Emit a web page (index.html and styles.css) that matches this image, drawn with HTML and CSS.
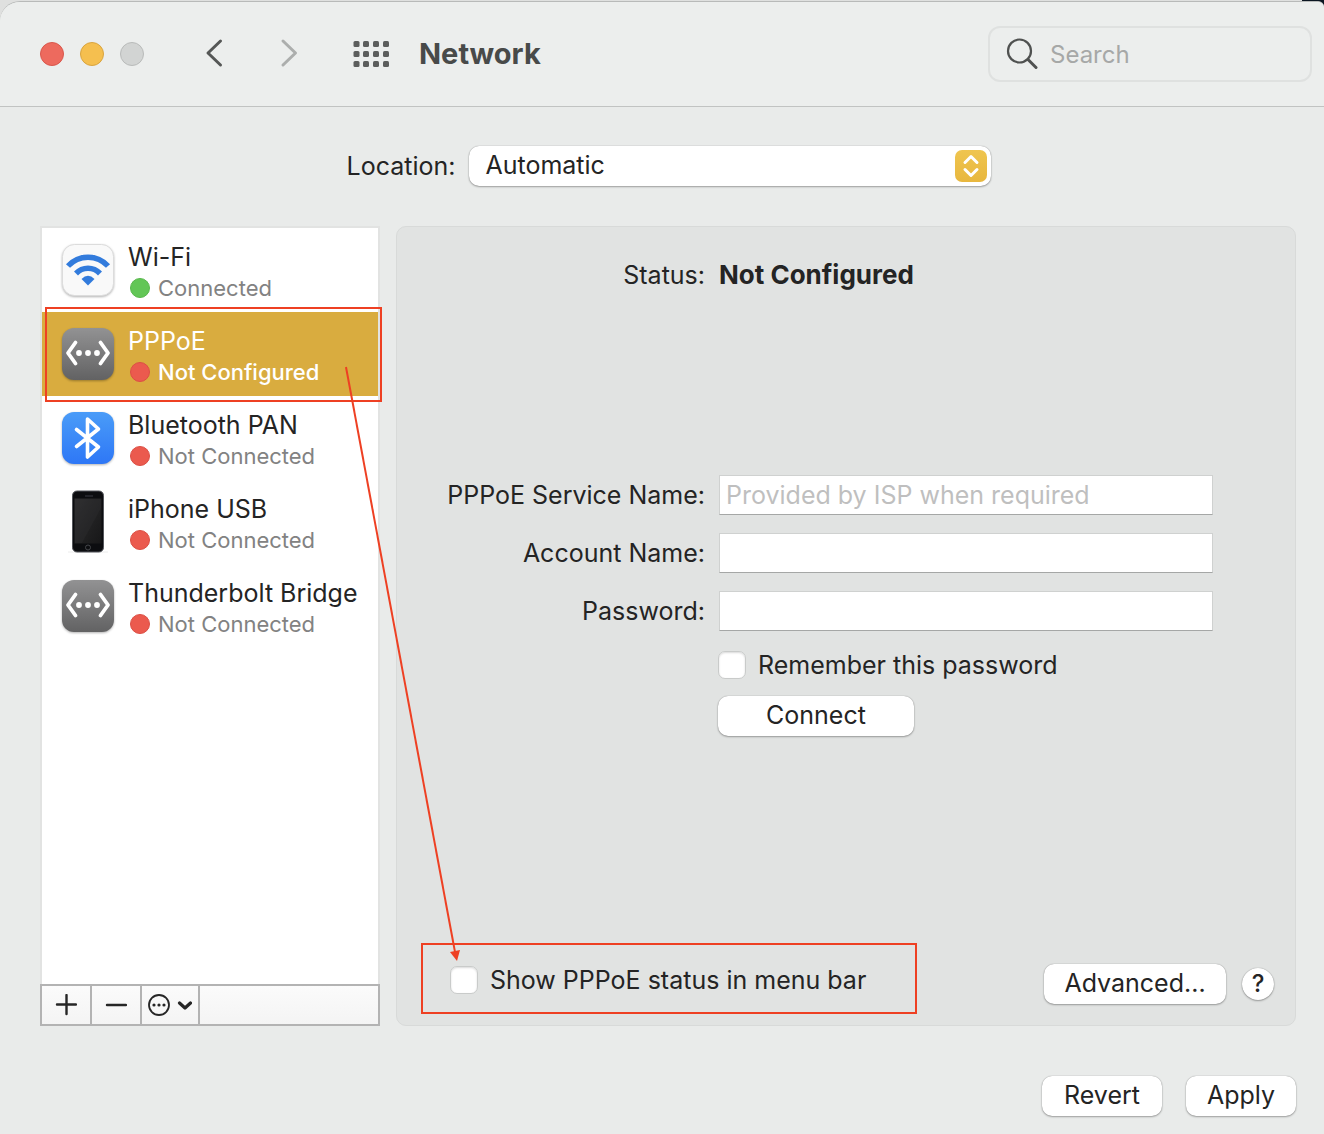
FILE: index.html
```
<!DOCTYPE html>
<html lang="en">
<head>
    <meta charset="UTF-8">
    <meta name="viewport" content="width=device-width, initial-scale=1.0">
    <title>Network</title>
    <link rel="stylesheet" href="styles.css">
</head>
<body>
    <div class="window">
        <header class="titlebar">
            <div class="lights">
                <button type="button" class="light close" aria-label="Close"></button>
                <button type="button" class="light minimize" aria-label="Minimize"></button>
                <button type="button" class="light zoom" aria-label="Zoom" disabled></button>
            </div>
            <nav class="nav">
                <button type="button" class="icon-button" aria-label="Back">
                    <svg width="20" height="32" viewBox="0 0 20 32"><path d="M16.5 3 L4 15 L16.5 27" fill="none" stroke="#555756" stroke-width="3" stroke-linecap="round" stroke-linejoin="round"/></svg>
                </button>
                <button type="button" class="icon-button" aria-label="Forward" disabled>
                    <svg width="20" height="32" viewBox="0 0 20 32"><path d="M3 3 L15.5 15 L3 27" fill="none" stroke="#acaead" stroke-width="3" stroke-linecap="round" stroke-linejoin="round"/></svg>
                </button>
            </nav>
            <button type="button" class="icon-button" aria-label="Show all">
                <svg width="36" height="26" viewBox="0 0 36 26" fill="#5c5e5d">
                    <rect x="0.5" y="0" width="6" height="6" rx="1.5"/><rect x="10" y="0" width="6" height="6" rx="1.5"/><rect x="20" y="0" width="6" height="6" rx="1.5"/><rect x="30" y="0" width="6" height="6" rx="1.5"/>
                    <rect x="0.5" y="10" width="6" height="6" rx="1.5"/><rect x="10" y="10" width="6" height="6" rx="1.5"/><rect x="20" y="10" width="6" height="6" rx="1.5"/><rect x="30" y="10" width="6" height="6" rx="1.5"/>
                    <rect x="0.5" y="20" width="6" height="6" rx="1.5"/><rect x="10" y="20" width="6" height="6" rx="1.5"/><rect x="20" y="20" width="6" height="6" rx="1.5"/><rect x="30" y="20" width="6" height="6" rx="1.5"/>
                </svg>
            </button>
            <h1>Network</h1>
            <label class="search">
                <svg width="32" height="32" viewBox="0 0 32 32" fill="none" stroke="#4f5150" stroke-linecap="round"><circle cx="13.5" cy="13" r="11.5" stroke-width="2.2"/><path d="M22 21.5 L30 29.5" stroke-width="3"/></svg>
                <input type="search" placeholder="Search" aria-label="Search">
            </label>
        </header>

        <div class="location">
            <label for="location">Location:</label>
            <div class="select">
                <select id="location">
                    <option>Automatic</option>
                </select>
                <svg class="stepper" width="32" height="32" viewBox="0 0 32 32">
                    <defs><linearGradient id="gold" x1="0" y1="0" x2="0" y2="1"><stop offset="0" stop-color="#efc54f"/><stop offset="1" stop-color="#e8b73e"/></linearGradient></defs>
                    <rect width="32" height="32" rx="7" fill="url(#gold)"/>
                    <path d="M10 12.5 L16 6.5 L22 12.5 M10 19.5 L16 25.5 L22 19.5" fill="none" stroke="#fff" stroke-width="3" stroke-linecap="round" stroke-linejoin="round"/>
                </svg>
            </div>
        </div>

        <main class="content">
            <section class="sidebar">
                <ul class="services">
                    <li class="service">
                        <svg class="service-icon" viewBox="0 0 52 52">
                            <rect x="0.5" y="0.5" width="51" height="51" rx="12" fill="#f9f9f9" stroke="#dcdcdc"/>
                            <g fill="none" stroke="#327bdc" stroke-width="5.5"><path d="M6 22 A27 27 0 0 1 46 22"/><path d="M14 29.5 A16.5 16.5 0 0 1 38 29.5"/></g>
                            <path d="M19.5 35 Q26 28.5 32.5 35 L26 41.5 Z" fill="#327bdc"/>
                        </svg>
                        <div>
                            <div class="name">Wi-Fi</div>
                            <div class="state"><span class="dot on"></span>Connected</div>
                        </div>
                    </li>
                    <li class="service selected">
                        <svg class="service-icon" viewBox="0 0 52 52">
                            <defs><linearGradient id="gray" x1="0" y1="0" x2="0" y2="1"><stop offset="0" stop-color="#929293"/><stop offset="1" stop-color="#626263"/></linearGradient></defs>
                            <rect width="52" height="52" rx="12" fill="url(#gray)"/>
                            <path d="M13.5 14.5 L6 25 L13.5 35.5 M38.5 14.5 L46 25 L38.5 35.5" fill="none" stroke="#fff" stroke-width="3.8" stroke-linecap="round" stroke-linejoin="round"/>
                            <g fill="#fff"><circle cx="17" cy="25" r="2.9"/><circle cx="26" cy="25" r="2.9"/><circle cx="35" cy="25" r="2.9"/></g>
                        </svg>
                        <div>
                            <div class="name">PPPoE</div>
                            <div class="state"><span class="dot"></span>Not Configured</div>
                        </div>
                    </li>
                    <li class="service">
                        <svg class="service-icon" viewBox="0 0 52 52">
                            <defs><linearGradient id="blue" x1="0" y1="0" x2="0" y2="1"><stop offset="0" stop-color="#4a9cf8"/><stop offset="1" stop-color="#2e77f6"/></linearGradient></defs>
                            <rect width="52" height="52" rx="12" fill="url(#blue)"/>
                            <path d="M14.5 17.5 L36.5 35 L25.5 45 V7 L36.500 17 L14.5 34.5" fill="none" stroke="#fff" stroke-width="3.6" stroke-linecap="round" stroke-linejoin="round"/>
                        </svg>
                        <div>
                            <div class="name">Bluetooth PAN</div>
                            <div class="state"><span class="dot"></span>Not Connected</div>
                        </div>
                    </li>
                    <li class="service">
                        <svg class="service-icon phone" viewBox="0 0 52 64">
                            <defs><linearGradient id="glass" x1="0" y1="0" x2="1" y2="1"><stop offset="0" stop-color="#2f2f30"/><stop offset="1" stop-color="#171718"/></linearGradient></defs>
                            <path d="M6 62 H46" stroke="#ececec"/>
                            <rect x="10.5" y="1" width="31" height="61" rx="4.5" fill="#0c0d10" stroke="#55575c"/>
                            <rect x="12.5" y="8.5" width="27" height="45" fill="url(#glass)"/>
                            <path d="M39 9 V18 L20 53 H13 V9 Z" fill="#333334" opacity="0.3"/>
                            <path d="M23 6 H31" stroke="#3b3d44"/>
                            <circle cx="26" cy="57.5" r="2.5" fill="none" stroke="#44464a"/>
                        </svg>
                        <div>
                            <div class="name">iPhone USB</div>
                            <div class="state"><span class="dot"></span>Not Connected</div>
                        </div>
                    </li>
                    <li class="service">
                        <svg class="service-icon" viewBox="0 0 52 52">
                            <rect width="52" height="52" rx="12" fill="url(#gray)"/>
                            <path d="M13.5 14.5 L6 25 L13.5 35.5 M38.5 14.5 L46 25 L38.5 35.5" fill="none" stroke="#fff" stroke-width="3.8" stroke-linecap="round" stroke-linejoin="round"/>
                            <g fill="#fff"><circle cx="17" cy="25" r="2.9"/><circle cx="26" cy="25" r="2.9"/><circle cx="35" cy="25" r="2.9"/></g>
                        </svg>
                        <div>
                            <div class="name">Thunderbolt Bridge</div>
                            <div class="state"><span class="dot"></span>Not Connected</div>
                        </div>
                    </li>
                </ul>
                <div class="toolbar">
                    <button type="button" aria-label="Add service">
                        <svg width="22" height="22" viewBox="0 0 22 22"><path d="M11.5 1 V20 M2 10.5 H21" stroke="#262626" stroke-width="2.4" stroke-linecap="round"/></svg>
                    </button>
                    <button type="button" aria-label="Remove service">
                        <svg width="22" height="22" viewBox="0 0 22 22"><path d="M2 11 H21" stroke="#262626" stroke-width="2.4" stroke-linecap="round"/></svg>
                    </button>
                    <button type="button" class="more" aria-label="More actions">
                        <svg width="44" height="22" viewBox="0 0 44 22">
                            <circle cx="11" cy="11" r="10" fill="none" stroke="#262626" stroke-width="1.8"/>
                            <g fill="#262626"><circle cx="6" cy="11" r="1.6"/><circle cx="11" cy="11" r="1.6"/><circle cx="16" cy="11" r="1.6"/></g>
                            <path d="M31.5 9 L37 14 L42.500 9" fill="none" stroke="#262626" stroke-width="3.2" stroke-linecap="round" stroke-linejoin="round"/>
                        </svg>
                    </button>
                </div>
            </section>

            <form class="panel">
                <div class="status">
                    <span class="field-label">Status:</span>
                    <strong>Not Configured</strong>
                </div>
                <div class="fields">
                    <label for="service">PPPoE Service Name:</label>
                    <input type="text" id="service" placeholder="Provided by ISP when required">
                    <label for="account">Account Name:</label>
                    <input type="text" id="account">
                    <label for="password">Password:</label>
                    <input type="password" id="password">
                </div>
                <div class="actions">
                    <label class="check"><input type="checkbox">Remember this password</label>
                    <button type="button" class="button connect">Connect</button>
                </div>
                <div class="panel-footer">
                    <label class="check highlight"><input type="checkbox">Show PPPoE status in menu bar</label>
                    <div class="buttons">
                        <button type="button" class="button advanced">Advanced...</button>
                        <button type="button" class="help" aria-label="Help">?</button>
                    </div>
                </div>
            </form>

            <!-- arrow from the PPPoE service to the menu bar option -->
            <svg class="arrow" width="120" height="600" viewBox="0 0 120 600">
                <path d="M2 1 L111 586" stroke="#ee4023" stroke-width="2"/>
                <path d="M113 595 L106 586 L116 584 Z" fill="#ee4023"/>
            </svg>
        </main>

        <footer class="footer">
            <button type="button" class="button revert">Revert</button>
            <button type="button" class="button apply">Apply</button>
        </footer>
    </div>
</body>
</html>
```
FILE: styles.css
```
* {
    box-sizing: border-box;
}
body {
    margin: 0;
    padding-top: 1px;
    background: linear-gradient(to left, #0b1622 22px, #dfe0df 22px);
    color: #242424;
    font-family: Inter, "Liberation Sans", sans-serif;
    font-size: 25px;
    line-height: 32px;
}
button, input, select {
    font: inherit;
    color: inherit;
}
button {
    padding: 0;
    border: none;
    background: none;
}
svg {
    display: block;
}
.window {
    display: flex;
    flex-direction: column;
    min-height: calc(100vh - 1px);
    border-top: 1px solid #b8bab9;
    border-radius: 20px 6px 0 0;
    background: #e9ebea;
}

/* Title bar */
.titlebar {
    display: flex;
    align-items: center;
    height: 105px;
    padding: 0 12px 0 40px;
    border-bottom: 1px solid #c1c3c2;
    border-radius: 20px 6px 0 0;
    background: #eceeed;
}
.lights {
    display: flex;
    gap: 16px;
}
.light {
    width: 24px;
    height: 24px;
    border: 1px solid #b9bbba;
    border-radius: 50%;
    background: #d2d4d3;
}
.light.close {
    border-color: #d9574c;
    background: #ed6a5e;
}
.light.minimize {
    border-color: #d9a43f;
    background: #f5bf4f;
}
.nav {
    display: flex;
    gap: 56px;
    margin: 0 53px 0 60px;
}
h1 {
    margin: 0 auto 0 30px;
    color: #484a49;
    font-size: 29px;
    font-weight: 700;
}
.search {
    display: flex;
    align-items: center;
    gap: 12px;
    width: 324px;
    height: 56px;
    padding: 0 16px;
    border: 2px solid #dfe1e0;
    border-radius: 12px;
}
.search input {
    flex: 1;
    min-width: 0;
    padding: 2px 0 0;
    border: none;
    outline: none;
    background: none;
    font-size: 24px;
}
.search input::placeholder {
    color: #a6a8a7;
}

/* Location */
.location {
    display: flex;
    align-items: center;
    justify-content: center;
    gap: 14px;
    padding: 39px 0 40px 14px;
}
.select {
    position: relative;
    width: 522px;
}
.select select {
    display: block;
    width: 100%;
    height: 40px;
    padding: 0 16px 2px;
    border: none;
    border-radius: 10px;
    appearance: none;
    background: #fff;
    box-shadow: 0 0 1px rgba(0,0,0,0.4), 0 1px 2px rgba(0,0,0,0.3);
}
.stepper {
    position: absolute;
    top: 4px;
    right: 4px;
    pointer-events: none;
}

/* Main area */
.content {
    position: relative;
    display: flex;
    flex: 1;
    gap: 16px;
    padding: 0 28px 0 40px;
}
.sidebar {
    display: flex;
    flex-direction: column;
    width: 340px;
}
.services {
    flex: 1;
    margin: 0;
    padding: 0;
    border: 2px solid #e2e3e2;
    border-bottom: none;
    background: #fff;
    list-style: none;
}
.service {
    position: relative;
    display: flex;
    gap: 14px;
    height: 84px;
    padding: 13px 0 0 20px;
}
.service-icon {
    width: 52px;
    height: 52px;
    margin-top: 3px;
    filter: drop-shadow(0 1px 1px rgba(0,0,0,0.3));
}
.service-icon.phone {
    height: 64px;
    margin-top: -3px;
    filter: none;
}
.state {
    display: flex;
    align-items: center;
    gap: 8px;
    height: 30px;
    padding-left: 2px;
    color: #828282;
    font-size: 22px;
}
.dot {
    width: 20px;
    height: 20px;
    border: 1px solid #dc4f44;
    border-radius: 50%;
    background: #eb5a4e;
}
.dot.on {
    border-color: #58b84c;
    background: #62c656;
}
.selected {
    background: #d9ac3f;
    color: #fff;
}
.selected .state {
    color: #fff;
    font-weight: 500;
}
.selected::after {
    content: "";
    position: absolute;
    top: -5px;
    right: -4px;
    bottom: -6px;
    left: 3px;
    border: 2px solid #ee4023;
}
.toolbar {
    display: flex;
    height: 42px;
    border: 2px solid #b3b3b3;
    background: linear-gradient(#fbfbfb, #f4f4f4);
}
.toolbar button {
    display: flex;
    align-items: center;
    justify-content: center;
    width: 50px;
    border-right: 2px solid #b3b3b3;
}
.toolbar .more {
    width: 58px;
}

/* Settings panel */
.panel {
    display: flex;
    flex: 1;
    flex-direction: column;
    border: 1px solid #d8dad9;
    border-radius: 10px;
    background: #e1e3e2;
}
.status, .fields {
    display: grid;
    grid-template-columns: 308px 1fr;
    gap: 18px 14px;
    align-items: center;
    padding-right: 82px;
}
.status {
    padding-top: 32px;
}
.status strong {
    font-size: 26px;
}
.field-label, .fields label {
    text-align: right;
}
.fields {
    margin-top: 184px;
}
.fields input {
    width: 100%;
    height: 40px;
    padding: 0 6px;
    border: 1px solid #cfd1d0;
    border-bottom-color: #a5a7a6;
    background: #fff;
}
.fields input::placeholder {
    color: #bfbfbf;
}
.actions {
    display: flex;
    flex-direction: column;
    align-items: flex-start;
    gap: 15px;
    margin: 18px 0 0 321px;
}
.check {
    display: flex;
    align-items: center;
    gap: 12px;
}
.check input {
    width: 28px;
    height: 28px;
    margin: 0;
    border: 1px solid #c9cbca;
    border-radius: 7px;
    appearance: none;
    background: #fff;
    box-shadow: inset 0 1px 2px rgba(0,0,0,0.15);
}
.button {
    height: 40px;
    padding-bottom: 2px;
    border-radius: 10px;
    background: #fff;
    box-shadow: 0 0 1px rgba(0,0,0,0.4), 0 1px 2px rgba(0,0,0,0.3);
}
.connect {
    width: 196px;
}
.advanced {
    width: 182px;
}
.panel-footer {
    display: flex;
    align-items: flex-end;
    justify-content: space-between;
    margin-top: auto;
    padding: 0 21px 11px 24px;
}
.highlight {
    width: 496px;
    height: 71px;
    padding: 3px 0 0 27px;
    border: 2px solid #ee4023;
}
.buttons {
    display: flex;
    align-items: center;
    gap: 16px;
    padding-bottom: 10px;
}
.help {
    width: 32px;
    height: 32px;
    border-radius: 50%;
    background: #fff;
    box-shadow: 0 0 1px rgba(0,0,0,0.4), 0 1px 2px rgba(0,0,0,0.3);
    font-size: 24px;
    font-weight: 500;
}
.arrow {
    position: absolute;
    top: 140px;
    left: 344px;
    pointer-events: none;
}

/* Window footer */
.footer {
    display: flex;
    justify-content: flex-end;
    gap: 24px;
    padding: 50px 28px 18px;
}
.revert {
    width: 120px;
}
.apply {
    width: 110px;
}
```
